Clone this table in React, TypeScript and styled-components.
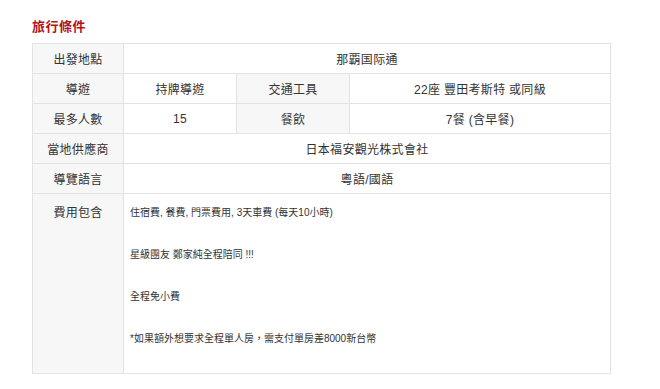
import React from "react";
import styled, { createGlobalStyle } from "styled-components";

const GlobalStyle = createGlobalStyle`
  html, body {
    margin: 0;
    padding: 0;
    background: #ffffff;
  }
  body {
    font-family: "Liberation Sans", "Noto Sans CJK TC", sans-serif;
    color: #333333;
  }
`;

const Page = styled.div`
  padding: 18px 0 0 32px;
`;

const Title = styled.h2`
  margin: 0 0 7px 0;
  font-size: 13px;
  line-height: 18px;
  font-weight: bold;
  color: #b3121d;
  letter-spacing: 0.5px;
`;

const Table = styled.table`
  border-collapse: collapse;
  table-layout: fixed;
  width: 578px;
  border: 1px solid #e3e3e3;
`;

const Cell = styled.td<{ $label?: boolean; $align?: "left" | "center" }>`
  border: 1px solid #e3e3e3;
  background: ${(p) => (p.$label ? "#f7f7f7" : "#ffffff")};
  height: 29px;
  padding: 0 6px;
  font-size: 12px;
  letter-spacing: 0.3px;
  text-align: ${(p) => p.$align ?? "center"};
  vertical-align: middle;
  color: #333333;
`;

const TopCell = styled(Cell)`
  vertical-align: top;
  padding-top: 9px;
`;

const Notes = styled.div`
  font-size: 10px;
  line-height: 21px;
  letter-spacing: 0;
  text-align: left;
  padding: 0 0 24px 0;
  margin-top: -1px;
`;

const NoteLine = styled.p`
  margin: 0 0 21px 0;
  &:last-child {
    margin-bottom: 0;
  }
`;

export default function App() {
  return (
    <>
      <GlobalStyle />
      <Page>
        <Title>旅行條件</Title>
        <Table>
          <colgroup>
            <col style={{ width: 91 }} />
            <col style={{ width: 113 }} />
            <col style={{ width: 113 }} />
            <col style={{ width: 261 }} />
          </colgroup>
          <tbody>
            <tr>
              <Cell $label>出發地點</Cell>
              <Cell colSpan={3}>那覇国际通</Cell>
            </tr>
            <tr>
              <Cell $label>導遊</Cell>
              <Cell>持牌導遊</Cell>
              <Cell $label>交通工具</Cell>
              <Cell>22座 豐田考斯特 或同級</Cell>
            </tr>
            <tr>
              <Cell $label>最多人數</Cell>
              <Cell>15</Cell>
              <Cell $label>餐飲</Cell>
              <Cell>7餐 (含早餐)</Cell>
            </tr>
            <tr>
              <Cell $label>當地供應商</Cell>
              <Cell colSpan={3}>日本福安觀光株式會社</Cell>
            </tr>
            <tr>
              <Cell $label>導覽語言</Cell>
              <Cell colSpan={3}>粵語/國語</Cell>
            </tr>
            <tr>
              <TopCell $label>費用包含</TopCell>
              <TopCell colSpan={3} $align="left">
                <Notes>
                  <NoteLine>住宿費, 餐費, 門票費用, 3天車費 (每天10小時)</NoteLine>
                  <NoteLine>星級團友 鄭家純全程陪同 !!!</NoteLine>
                  <NoteLine>全程免小費</NoteLine>
                  <NoteLine>*如果額外想要求全程單人房，需支付單房差8000新台幣</NoteLine>
                </Notes>
              </TopCell>
            </tr>
          </tbody>
        </Table>
      </Page>
    </>
  );
}
